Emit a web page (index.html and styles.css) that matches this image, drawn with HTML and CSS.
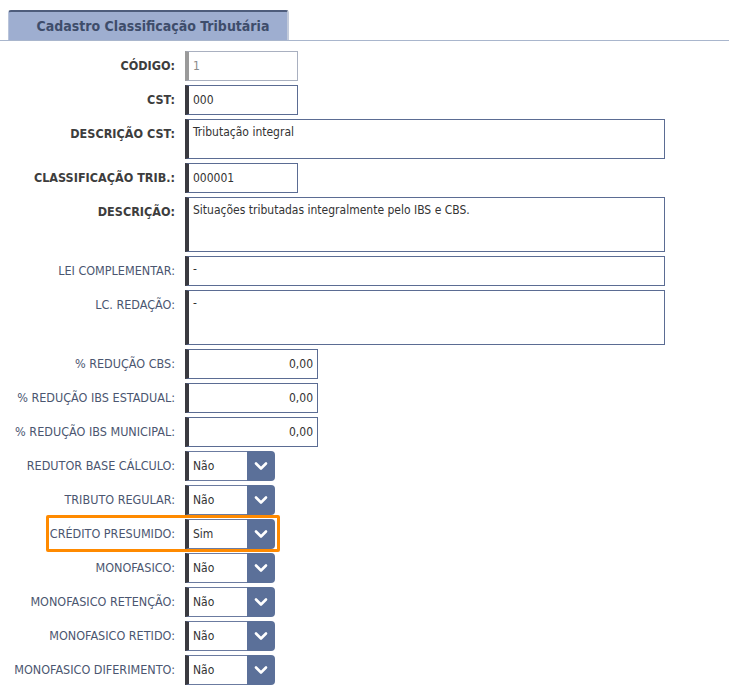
FILE: index.html
```html
<!DOCTYPE html>
<html lang="pt-BR">
<head>
<meta charset="utf-8">
<title>Cadastro Classificação Tributária</title>
<link rel="stylesheet" href="styles.css">
</head>
<body>
<div class="tabbar">
  <div class="tab">Cadastro Classificação Tributária</div>
</div>
<form class="form">
  <div class="row">
    <label class="lbl strong">CÓDIGO:</label>
    <input class="fld sm disabled" type="text" value="1" readonly>
  </div>
  <div class="row">
    <label class="lbl strong">CST:</label>
    <input class="fld sm" type="text" value="000">
  </div>
  <div class="row">
    <label class="lbl strong">DESCRIÇÃO CST:</label>
    <textarea class="fld wide h40">Tributação integral</textarea>
  </div>
  <div class="row">
    <label class="lbl strong">CLASSIFICAÇÃO TRIB.:</label>
    <input class="fld sm" type="text" value="000001">
  </div>
  <div class="row">
    <label class="lbl strong">DESCRIÇÃO:</label>
    <textarea class="fld wide h55">Situações tributadas integralmente pelo IBS e CBS.</textarea>
  </div>
  <div class="row">
    <label class="lbl">LEI COMPLEMENTAR:</label>
    <textarea class="fld wide h30">-</textarea>
  </div>
  <div class="row">
    <label class="lbl">LC. REDAÇÃO:</label>
    <textarea class="fld wide h55">-</textarea>
  </div>
  <div class="row">
    <label class="lbl">% REDUÇÃO CBS:</label>
    <input class="fld pct num" type="text" value="0,00">
  </div>
  <div class="row">
    <label class="lbl">% REDUÇÃO IBS ESTADUAL:</label>
    <input class="fld pct num" type="text" value="0,00">
  </div>
  <div class="row">
    <label class="lbl">% REDUÇÃO IBS MUNICIPAL:</label>
    <input class="fld pct num" type="text" value="0,00">
  </div>
  <div class="row">
    <label class="lbl">REDUTOR BASE CÁLCULO:</label>
    <div class="sel"><span class="sel-val">Não</span><span class="sel-btn"><svg width="14" height="14" viewBox="0 0 14 14"><path d="M2 4.5 L7 9.5 L12 4.5" fill="none" stroke="#fff" stroke-width="2.6" stroke-linecap="round" stroke-linejoin="round"/></svg></span></div>
  </div>
  <div class="row">
    <label class="lbl">TRIBUTO REGULAR:</label>
    <div class="sel"><span class="sel-val">Não</span><span class="sel-btn"><svg width="14" height="14" viewBox="0 0 14 14"><path d="M2 4.5 L7 9.5 L12 4.5" fill="none" stroke="#fff" stroke-width="2.6" stroke-linecap="round" stroke-linejoin="round"/></svg></span></div>
  </div>
  <div class="row">
    <span class="mark"></span>
    <label class="lbl">CRÉDITO PRESUMIDO:</label>
    <div class="sel"><span class="sel-val">Sim</span><span class="sel-btn"><svg width="14" height="14" viewBox="0 0 14 14"><path d="M2 4.5 L7 9.5 L12 4.5" fill="none" stroke="#fff" stroke-width="2.6" stroke-linecap="round" stroke-linejoin="round"/></svg></span></div>
  </div>
  <div class="row">
    <label class="lbl">MONOFASICO:</label>
    <div class="sel"><span class="sel-val">Não</span><span class="sel-btn"><svg width="14" height="14" viewBox="0 0 14 14"><path d="M2 4.5 L7 9.5 L12 4.5" fill="none" stroke="#fff" stroke-width="2.6" stroke-linecap="round" stroke-linejoin="round"/></svg></span></div>
  </div>
  <div class="row">
    <label class="lbl">MONOFASICO RETENÇÃO:</label>
    <div class="sel"><span class="sel-val">Não</span><span class="sel-btn"><svg width="14" height="14" viewBox="0 0 14 14"><path d="M2 4.5 L7 9.5 L12 4.5" fill="none" stroke="#fff" stroke-width="2.6" stroke-linecap="round" stroke-linejoin="round"/></svg></span></div>
  </div>
  <div class="row">
    <label class="lbl">MONOFASICO RETIDO:</label>
    <div class="sel"><span class="sel-val">Não</span><span class="sel-btn"><svg width="14" height="14" viewBox="0 0 14 14"><path d="M2 4.5 L7 9.5 L12 4.5" fill="none" stroke="#fff" stroke-width="2.6" stroke-linecap="round" stroke-linejoin="round"/></svg></span></div>
  </div>
  <div class="row">
    <label class="lbl">MONOFASICO DIFERIMENTO:</label>
    <div class="sel"><span class="sel-val">Não</span><span class="sel-btn"><svg width="14" height="14" viewBox="0 0 14 14"><path d="M2 4.5 L7 9.5 L12 4.5" fill="none" stroke="#fff" stroke-width="2.6" stroke-linecap="round" stroke-linejoin="round"/></svg></span></div>
  </div>
</form>
</body>
</html>
```

FILE: styles.css
```css
html, body {
  margin: 0;
  padding: 0;
  background: #ffffff;
}
body {
  font-family: "DejaVu Sans Condensed", "DejaVu Sans", sans-serif;
  font-size: 12px;
  color: #333;
}
.tabbar {
  padding-top: 10px;
  padding-left: 8px;
  border-bottom: 1px solid #a9b6cd;
  display: flex;
}
.tab {
  width: 268px;
  height: 28px;
  line-height: 28px;
  padding-left: 10px;
  background: #9eaed0;
  border-top: 2px solid #4e5d7c;
  border-right: 2px solid #c3cbdb;
  border-left: 1px solid #b9c4da;
  border-radius: 3px 3px 0 0;
  text-align: center;
  font-weight: bold;
  font-size: 14px;
  color: #3e4d6b;
}
.form {
  display: flex;
  flex-direction: column;
  gap: 4px;
  padding-top: 10px;
}
.row {
  display: flex;
  align-items: flex-start;
  position: relative;
}
.lbl {
  width: 185px;
  padding-right: 10px;
  box-sizing: border-box;
  text-align: right;
  line-height: 30px;
  font-size: 12.5px;
  color: #4b5670;
  white-space: nowrap;
  flex: none;
  position: relative;
}
.lbl.strong {
  font-weight: bold;
  color: #3d3d3d;
}
.fld {
  box-sizing: border-box;
  margin: 0;
  height: 30px;
  border: 1px solid #5b6c93;
  border-left: 4px solid #3a3a40;
  background: #fff;
  font-family: inherit;
  font-size: 12px;
  color: #333;
  padding: 0 4px;
  outline: none;
  flex: none;
}
textarea.fld {
  resize: none;
  padding: 5px 4px;
  line-height: 15px;
  overflow: hidden;
}
.fld.sm { width: 113px; }
.fld.pct { width: 133px; }
.fld.wide { width: 480px; }
.fld.h30 { height: 30px; }
.fld.h40 { height: 40px; }
.fld.h55 { height: 55px; }
.fld.num { text-align: right; }
.fld.disabled {
  border-color: #a9b0c0;
  border-left-color: #9a9a9a;
  color: #8a8a8a;
}
.sel {
  display: flex;
  width: 90px;
  height: 30px;
  flex: none;
}
.sel-val {
  flex: 1;
  box-sizing: border-box;
  border: 1px solid #6b7ba0;
  border-right: none;
  border-left: 4px solid #3a3a40;
  line-height: 28px;
  padding-left: 4px;
  color: #333;
}
.sel-btn {
  width: 28px;
  background: #5b7099;
  border-radius: 0 4px 4px 0;
  display: flex;
  align-items: center;
  justify-content: center;
}
.mark {
  position: absolute;
  left: 46px;
  top: -4px;
  width: 234px;
  height: 37px;
  box-sizing: border-box;
  border: 3px solid #ff8a00;
  border-radius: 2px;
  pointer-events: none;
  z-index: 1;
}
```
